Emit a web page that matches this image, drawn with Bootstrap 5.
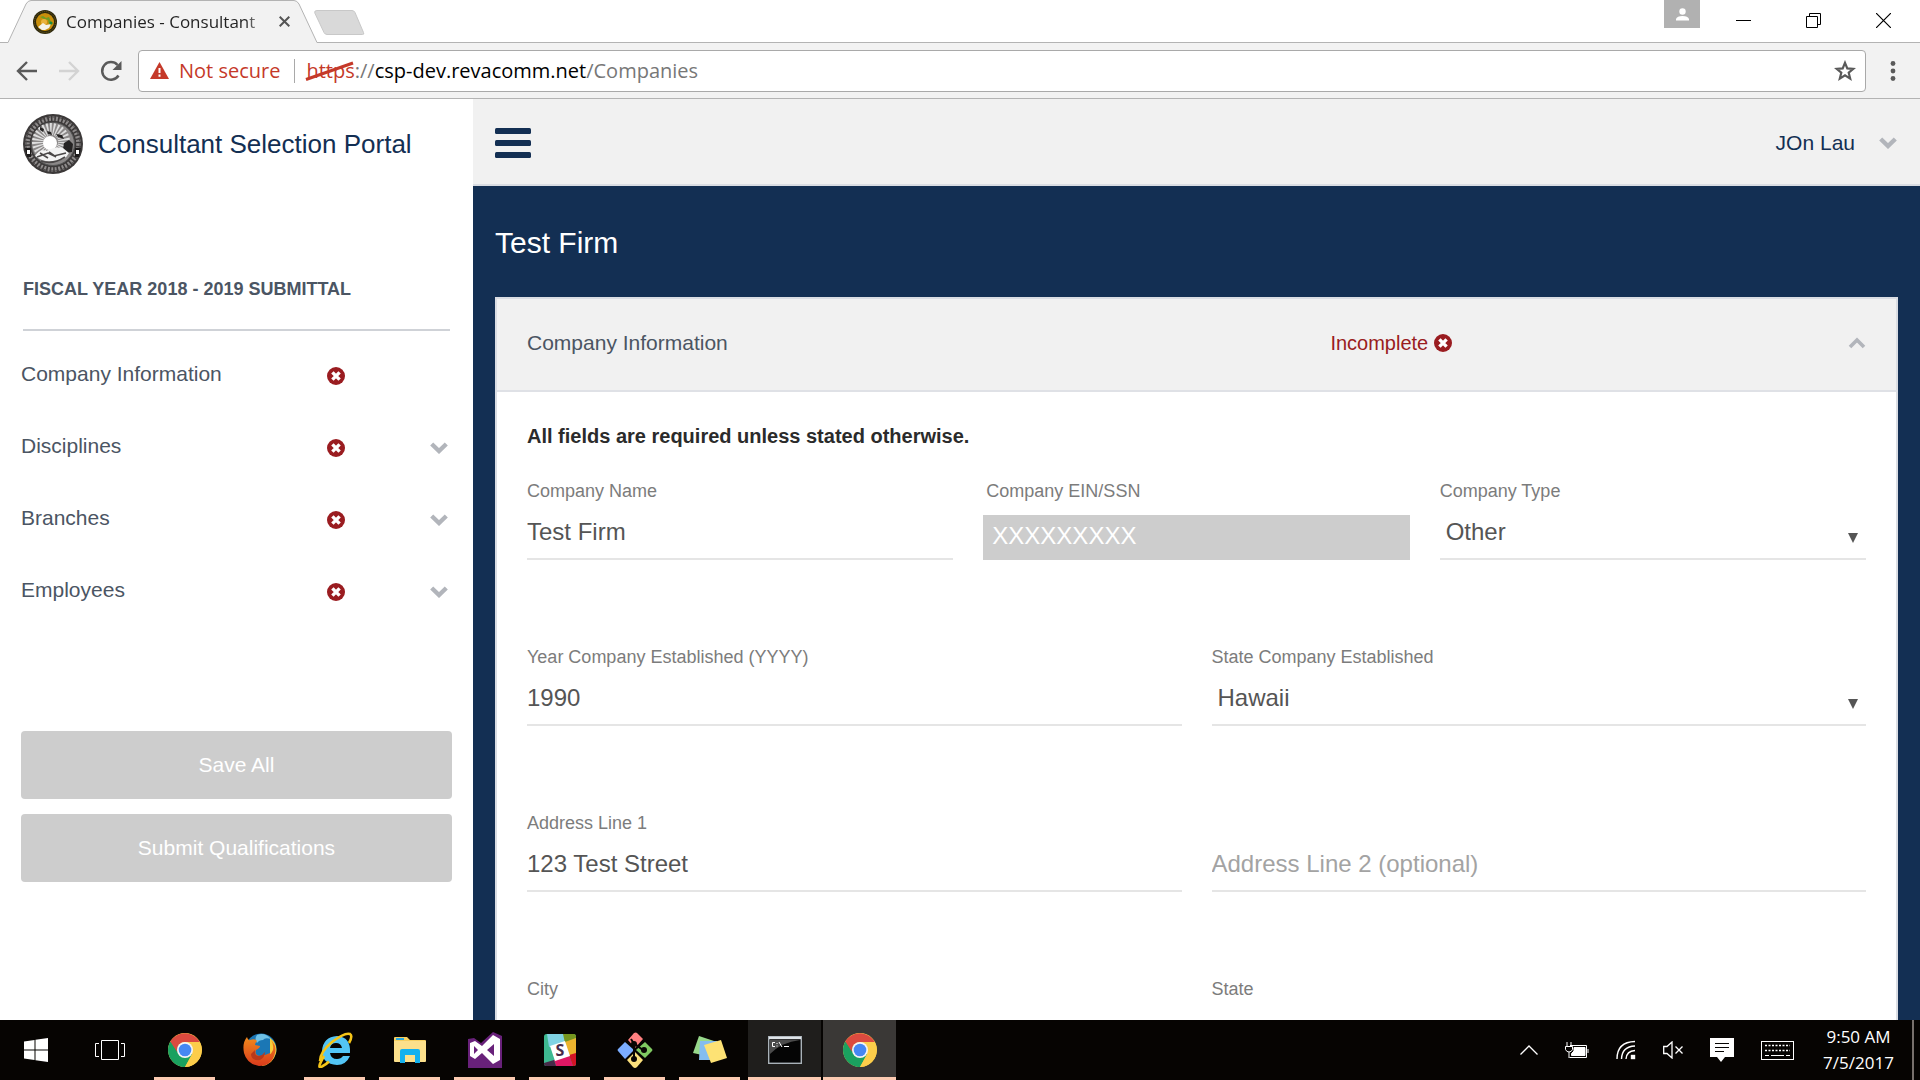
<!DOCTYPE html>
<html lang="en">
<head>
<meta charset="utf-8">
<meta name="viewport" content="width=device-width, initial-scale=1">
<title>Companies - Consultant Selection Portal</title>
<link href="https://cdn.jsdelivr.net/npm/bootstrap@5.3.0/dist/css/bootstrap.min.css" rel="stylesheet">
<style>
  :root { --navy: #132f53; --panel: #f1f1f1; --line: #dadde3; --slate: #4b5563; --alert: #9a1c20; --off: #cdcdcd; }
  body { font-family: "Liberation Sans", Arial, sans-serif; font-size: 21px; line-height: 24px; color: var(--slate); background: #fff; }
  svg { display: block; flex: none; }
  button { font: inherit; }
  .plain-btn { background: none; border: 0; padding: 0; color: inherit; display: flex; align-items: center; justify-content: center; }
  .chrome-ui { font-family: "Open Sans", "Noto Sans", sans-serif; }

  /* browser frame */
  .tab-strip { height: 43px; border-bottom: 1px solid #b3b3b3; }
  .tab-active { width: 310px; height: 43px; margin-left: 8px; margin-bottom: -1px; }
  .tab-content-row { padding: 0 28px 0 25px; height: 43px; font-size: 17px; color: #222; gap: 9px; }
  .tab-title { background: linear-gradient(90deg, #222 88%, #ccc 97%); -webkit-background-clip: text; background-clip: text; color: transparent; }
  .new-tab { margin: 10px 0 0 -4px; }
  .profile-btn { width: 36px; height: 28px; background: #b1b1b1; }
  .win-group { padding: 0 2px 0 8px; }
  .win-btn { width: 70px; height: 41px; color: #000; }
  .toolbar { height: 56px; background: #f2f2f2; border-bottom: 1px solid #b3b3b3; padding: 0 24px 0 16px; }
  .nav-icons { gap: 20px; width: 122px; }
  .omnibox { height: 42px; background: #fff; border: 1px solid #a9a9a9; border-radius: 4px; font-size: 20px; padding: 0 9px 0 11px; color: #777; }
  .insecure { color: #c53929; gap: 10px; }
  .url-sep { width: 1px; height: 24px; background: #a9a9a9; margin: 0 11px 0 14px; }
  .url-scheme { color: #c53929; }
  .strike-line { position: absolute; left: -1px; top: 3px; }

  /* application */
  .side-nav { flex: 0 0 473px; background: #fff; padding: 15px 21px 0; }
  .brand { color: var(--navy); font-size: 26px; line-height: 32px; gap: 15px; padding-left: 2px; height: 60px; }
  .year-head { font-size: 18px; line-height: 20px; font-weight: 700; margin: 105px 2px 0; padding-bottom: 30px; border-bottom: 2px solid #cfd2d7; }
  .side-list { margin-top: 7px; }
  .side-item { height: 72px; }
  .side-item > a { flex: 0 0 306px; }
  .side-item .plain-btn { width: 18px; margin-top: 4px; }
  .side-actions { gap: 15px; margin-top: 105px; }
  .btn-off { background: var(--off); color: #fff; border: 0; border-radius: 4px; height: 68px; font-size: 21px; }
  .btn-off:disabled { background: var(--off); color: #fff; opacity: 1; }
  .app-bar { height: 87px; background: var(--panel); border-bottom: 2px solid var(--line); padding: 3px 23px 0 22px; color: var(--navy); }
  .work-area { background: var(--navy); padding: 0 22px; }
  .firm-title { font-size: 30px; line-height: 36px; color: #fff; margin: 0; padding: 39px 0 36px; }
  .firm-card { border: 2px solid var(--line); background: #fff; }
  .firm-card-head { height: 93px; background: var(--panel); border-bottom: 2px solid #dfe1e6; padding: 0 30px 3px; }
  .head-name { flex: 0 0 60%; }
  .status-text { color: var(--alert); font-size: 20px; gap: 6px; }
  .firm-card-body { padding: 33px 30px 0; }
  .req-note { font-size: 20px; line-height: 22px; color: #2b2b2b; margin-bottom: 34px; }
  .field-row { display: flex; gap: 30px; height: 166px; align-items: flex-start; }
  .field { flex: 1 1 0; min-width: 0; }
  .field label { display: block; font-size: 18px; line-height: 20px; height: 20px; color: #7c7c7c; margin-bottom: 4px; }
  .line-input { display: block; width: 100%; height: 55px; border: 0; border-bottom: 2px solid #e5e5e5; border-radius: 0; padding: 0; font-size: 24px; line-height: 28px; color: #555; background-color: #fff; outline: 0; }
  .line-input::placeholder { color: #a3a3a3; opacity: 1; }
  select.line-input { appearance: none; padding-left: 6px; background: #fff url("data:image/svg+xml,%3Csvg xmlns='http://www.w3.org/2000/svg' width='10' height='10'%3E%3Cpath d='M0 0h10L5 10z' fill='%23555'/%3E%3C/svg%3E") no-repeat right 8px top 28px; }
  .field-locked label { padding-left: 3px; height: 30px; }
  .field-locked .line-input { background: var(--off); color: #fff; height: 45px; border: 0; padding: 0 9px 4px; }

  /* desktop task bar */
  .task-bar { height: 60px; background: #060402; color: #fff; }
  .task-app { width: 75px; height: 60px; border: solid transparent; border-width: 0 7px; }
  .task-run { box-shadow: inset 0 -3px #fbcab1; }
  .task-open { border-width: 0 1px; background-clip: padding-box; background-color: #1f1e1c; }
  .task-front { background-color: #3a3836; }
  .start-btn { width: 72px; height: 60px; }
  .tray { gap: 27px; padding-right: 6px; }
  .clock { font-size: 17px; line-height: 26px; width: 75px; text-align: center; white-space: nowrap; }
  .peek { width: 2px; height: 60px; background: #77706c; }
</style>
<script src="https://cdn.jsdelivr.net/npm/bootstrap@5.3.0/dist/js/bootstrap.bundle.min.js"></script>
</head>
<body class="vh-100 d-flex flex-column overflow-hidden">

<svg width="0" height="0" class="position-absolute" aria-hidden="true">
  <defs>
    <symbol id="bad" viewBox="0 0 18 18"><circle cx="9" cy="9" r="9" fill="#9a1c20"/><path d="M5.4 5.400l7.200 7.200M12.600 5.400l-7.200 7.200" stroke="#fff" stroke-width="3.400"/></symbol>
    <symbol id="down" viewBox="0 0 18 12"><path d="M1.700 2l7.300 7L16.300 2" fill="none" stroke="#b2b5bb" stroke-width="4.400"/></symbol>
    <symbol id="chrome" viewBox="0 0 34 34">
      <circle cx="17" cy="17" r="17" fill="#fccd4a"/>
      <path d="M17 17L2.300 8.500A17 17 0 0 0 17 34l7.400-12.800z" fill="#1aa15f"/>
      <path d="M2.300 8.500A17 17 0 0 1 31.700 9H17a8 8 0 0 0-7.500 10.500z" fill="#db4a3f"/>
      <path d="M17 9h14.800A17 17 0 0 1 17 34l7-13z" fill="#fccd4a"/>
      <circle cx="17" cy="17" r="8" fill="#f4f4f4"/><circle cx="17" cy="17" r="6.300" fill="#4587f3"/>
    </symbol>
  </defs>
</svg>

<header class="chrome-ui">
  <div class="tab-strip d-flex align-items-start">
    <div class="tab-active position-relative">
      <svg class="position-absolute" width="310" height="43" viewBox="0 0 310 43"><path d="M0 42.500L18 4Q20 .5 23 .5H286Q289 .5 291 4L309 42.500V43H0z" fill="#f2f2f2"/><path d="M0 42.500L18 4Q20 .5 23 .5H286Q289 .5 291 4L309 42.500" fill="none" stroke="#b3b3b3"/></svg>
      <div class="tab-content-row position-relative d-flex align-items-center">
        <svg width="24" height="24" viewBox="0 0 24 24"><circle cx="12" cy="12" r="12" fill="#2d280d"/><circle cx="12" cy="12" r="10.500" fill="none" stroke="#70601a" stroke-dasharray="1 1"/><circle cx="12" cy="12" r="9" fill="#c98f0b"/><path d="M7 7l3-1 3 2 3-1 2 5-2 2-1-4-4-1z" fill="#6d9c25"/><circle cx="11" cy="12" r="3" fill="#e9b23c"/><path d="M5 17l5-4 3 2 5-1-2 4-4 2H9z" fill="#f4f2ea"/><circle cx="18" cy="13" r="1.600" fill="#188b3c"/></svg>
        <span class="tab-title text-nowrap flex-grow-1">Companies - Consultant</span>
        <button class="plain-btn" aria-label="Close tab"><svg width="11" height="11" viewBox="0 0 11 11"><path d="M.7.7l9.600 9.600M10.300.7L.7 10.300" stroke="#555" stroke-width="2"/></svg></button>
      </div>
    </div>
    <button class="plain-btn new-tab" aria-label="New tab"><svg width="51" height="26" viewBox="0 0 51 26"><path d="M3 .5h35q2 0 3 2l8.500 20q1 2-1 2H13q-2 0-3-2L.8 3Q0 .5 3 .5z" fill="#d9d9d9" stroke="#c8c8c8"/></svg></button>
    <div class="ms-auto d-flex align-items-start">
      <button class="plain-btn profile-btn" aria-label="Profile"><svg width="13" height="13" viewBox="0 0 13 13" fill="#fff"><circle cx="6.500" cy="3.500" r="3.200"/><path d="M0 12.500V11q1-3 6.500-3T13 11v1.500z"/></svg></button>
      <span class="win-group d-flex">
        <button class="plain-btn win-btn" aria-label="Minimize"><svg width="15" height="2"><path d="M0 .5h15" stroke="#000"/></svg></button>
        <button class="plain-btn win-btn" aria-label="Restore"><svg width="15" height="15" viewBox="0 0 15 15"><path d="M.5 3.500h11v11H.5zM3.500 3V.5h11v11H12" fill="none" stroke="#000"/></svg></button>
        <button class="plain-btn win-btn" aria-label="Close"><svg width="15" height="15" viewBox="0 0 15 15"><path d="M0 0l15 15M15 0L0 15" stroke="#000" stroke-width="1.200"/></svg></button>
      </span>
    </div>
  </div>
  <div class="toolbar d-flex align-items-center">
    <div class="nav-icons d-flex align-items-center">
      <button class="plain-btn" aria-label="Back"><svg width="22" height="20" viewBox="0 0 22 20"><path d="M21 10H3M11 1l-9 9 9 9" fill="none" stroke="#5a5a5a" stroke-width="2.400"/></svg></button>
      <button class="plain-btn" aria-label="Forward"><svg width="22" height="20" viewBox="0 0 22 20"><path d="M1 10h18M11 1l9 9-9 9" fill="none" stroke="#d3d3d3" stroke-width="2.400"/></svg></button>
      <button class="plain-btn" aria-label="Reload"><svg width="22" height="22" viewBox="0 0 22 22"><path d="M18.500 15.500A8.800 8.800 0 1 1 17.500 5" fill="none" stroke="#5a5a5a" stroke-width="2.500"/><path d="M21.500 1v9h-9z" fill="#5a5a5a"/></svg></button>
    </div>
    <div class="omnibox flex-grow-1 d-flex align-items-center" role="textbox" aria-label="Address">
      <span class="insecure d-flex align-items-center"><svg width="19" height="17" viewBox="0 0 19 17"><path d="M9.500 0L19 17H0z" fill="#c53929"/><path d="M9.500 6v5M9.500 12.500v2.200" stroke="#fff" stroke-width="2"/></svg>Not secure</span>
      <span class="url-sep"></span>
      <span class="text-nowrap flex-grow-1"><span class="url-scheme position-relative">https<svg class="strike-line" width="50" height="22" viewBox="0 0 50 22"><path d="M1 19.500L48 3" stroke="#c53929" stroke-width="3"/></svg></span>://<span class="text-black">csp-dev.revacomm.net</span>/Companies</span>
      <button class="plain-btn" aria-label="Bookmark"><svg width="22" height="21" viewBox="0 0 22 21"><path d="M11 2.800l2.300 5.600 6 .4-4.600 3.900 1.500 5.900L11 15.400l-5.200 3.200 1.500-5.900L2.700 8.800l6-.4z" fill="none" stroke="#5a5a5a" stroke-width="2.200"/></svg></button>
    </div>
    <button class="plain-btn ps-4" aria-label="Menu"><svg width="6" height="20" viewBox="0 0 6 20" fill="#5a5a5a"><circle cx="3" cy="2.500" r="2.400"/><circle cx="3" cy="10" r="2.400"/><circle cx="3" cy="17.500" r="2.400"/></svg></button>
  </div>
</header>

<div class="d-flex flex-grow-1 overflow-hidden">
  <aside class="side-nav">
    <a href="#" class="brand d-flex align-items-center text-decoration-none">
      <svg width="60" height="60" viewBox="0 0 60 60">
        <circle cx="30" cy="30" r="30" fill="#3c3939"/>
        <circle cx="30" cy="30" r="25.500" fill="none" stroke="#8f8c8c" stroke-width="4.500" stroke-dasharray="2 1.600"/>
        <circle cx="30" cy="30" r="27" fill="none" stroke="#4a4747" stroke-width="1" stroke-dasharray="4 2"/>
        <circle cx="30" cy="30" r="21.500" fill="#8b8888" stroke="#555" stroke-width="1"/>
        <circle cx="28" cy="28" r="13" fill="none" stroke="#dedede" stroke-width="12" stroke-dasharray="1.500 1.500"/>
        <path d="M17 13l4 2-1 3-3-2zM24 17l4 1 1 3-4-1zM33 20l6 1 2 4-6-2zM41 29l5-3 4 4-1 8-6 1-3-4z" fill="#252323"/>
        <circle cx="27" cy="29" r="7" fill="#fff"/>
        <path d="M12 42q5-8 12-5 7-5 16-3l6 5q-4 8-15 8-10 2-19-5z" fill="#f3f3f3"/>
        <path d="M14 43l11-4 6 3 12-3M26 38l7 5M17 39l8 5M18 47q12 4 24-4" fill="none" stroke="#4a4747" stroke-width="1.600"/>
        <path d="M2 34h6v9H4zM58 34h-6v9h4z" fill="#1d1b1b"/><path d="M4 36h3v4H4zM53 36h3v4h-3z" fill="#fff"/>
      </svg>
      <span>Consultant Selection Portal</span>
    </a>
    <h2 class="year-head">FISCAL YEAR 2018 - 2019 SUBMITTAL</h2>
    <ul class="side-list list-unstyled mb-0">
      <li class="side-item d-flex align-items-center"><a href="#" class="text-reset text-decoration-none">Company Information</a><svg width="18" height="18" class="mt-1"><use href="#bad"/></svg></li>
      <li class="side-item d-flex align-items-center"><a href="#" class="text-reset text-decoration-none">Disciplines</a><svg width="18" height="18" class="mt-1"><use href="#bad"/></svg><button class="plain-btn ms-auto me-1" aria-label="Expand Disciplines"><svg width="18" height="12"><use href="#down"/></svg></button></li>
      <li class="side-item d-flex align-items-center"><a href="#" class="text-reset text-decoration-none">Branches</a><svg width="18" height="18" class="mt-1"><use href="#bad"/></svg><button class="plain-btn ms-auto me-1" aria-label="Expand Branches"><svg width="18" height="12"><use href="#down"/></svg></button></li>
      <li class="side-item d-flex align-items-center"><a href="#" class="text-reset text-decoration-none">Employees</a><svg width="18" height="18" class="mt-1"><use href="#bad"/></svg><button class="plain-btn ms-auto me-1" aria-label="Expand Employees"><svg width="18" height="12"><use href="#down"/></svg></button></li>
    </ul>
    <div class="side-actions d-flex flex-column">
      <button class="btn btn-off" disabled>Save All</button>
      <button class="btn btn-off" disabled>Submit Qualifications</button>
    </div>
  </aside>

  <main class="d-flex flex-column flex-grow-1 overflow-hidden">
    <div class="app-bar d-flex align-items-center justify-content-between flex-shrink-0">
      <button class="plain-btn" aria-label="Toggle menu"><svg width="36" height="30" viewBox="0 0 36 30" fill="#132f53"><rect width="36" height="6" rx="1.500"/><rect y="12" width="36" height="6" rx="1.500"/><rect y="24" width="36" height="6" rx="1.500"/></svg></button>
      <button class="plain-btn gap-4"><span>JOn Lau</span><svg width="18" height="12"><use href="#down"/></svg></button>
    </div>
    <div class="work-area flex-grow-1 overflow-hidden">
      <h1 class="firm-title">Test Firm</h1>
      <section class="firm-card">
        <div class="firm-card-head d-flex align-items-center">
          <span class="head-name">Company Information</span>
          <span class="status-text d-flex align-items-center">Incomplete <svg width="18" height="18"><use href="#bad"/></svg></span>
          <button class="plain-btn ms-auto" aria-label="Collapse"><svg width="18" height="12" viewBox="0 0 18 12"><path d="M2 10l7-7 7 7" fill="none" stroke="#b2b5bb" stroke-width="3.600"/></svg></button>
        </div>
        <form class="firm-card-body">
          <p class="req-note fw-bold">All fields are required unless stated otherwise.</p>
          <div class="field-row">
            <div class="field"><label for="cname">Company Name</label><input id="cname" class="line-input" type="text" value="Test Firm"></div>
            <div class="field field-locked"><label for="ein">Company EIN/SSN</label><input id="ein" class="line-input" type="text" value="XXXXXXXXX" readonly></div>
            <div class="field"><label for="ctype">Company Type</label><select id="ctype" class="line-input"><option>Other</option></select></div>
          </div>
          <div class="field-row">
            <div class="field"><label for="year">Year Company Established (YYYY)</label><input id="year" class="line-input" type="text" value="1990"></div>
            <div class="field"><label for="est">State Company Established</label><select id="est" class="line-input"><option>Hawaii</option></select></div>
          </div>
          <div class="field-row">
            <div class="field"><label for="addr1">Address Line 1</label><input id="addr1" class="line-input" type="text" value="123 Test Street"></div>
            <div class="field"><label for="addr2" aria-label="Address Line 2"></label><input id="addr2" class="line-input" type="text" placeholder="Address Line 2 (optional)"></div>
          </div>
          <div class="field-row">
            <div class="field"><label for="city">City</label><input id="city" class="line-input" type="text"></div>
            <div class="field"><label for="state">State</label><select id="state" class="line-input"></select></div>
          </div>
        </form>
      </section>
    </div>
  </main>
</div>

<footer class="task-bar chrome-ui d-flex align-items-center flex-shrink-0">
  <button class="plain-btn start-btn" aria-label="Start"><svg width="24" height="24" viewBox="0 0 24 24" fill="#fff"><path d="M0 3.500L10.500 2v9.500H0zM11.500 1.800L24 0v11.500H11.500zM0 12.500h10.500V22L0 20.500zM11.500 12.500H24V24l-12.500-1.800z"/></svg></button>
  <button class="plain-btn task-app" aria-label="Task view"><svg width="30" height="20" viewBox="0 0 30 20" fill="none" stroke="#fff"><path d="M6.500.5h17v19h-17zM4 3.500H.5v13H4M26 3.500h3.500v13H26"/></svg></button>
  <button class="plain-btn task-app task-run" aria-label="Chrome"><svg width="34" height="34"><use href="#chrome"/></svg></button>
  <button class="plain-btn task-app" aria-label="Firefox"><svg width="34" height="34" viewBox="0 0 34 34"><defs><linearGradient id="ff" x1="0" y1="0" x2="0" y2="1"><stop offset="0" stop-color="#f08a1c"/><stop offset="1" stop-color="#d93a1c"/></linearGradient></defs><circle cx="18" cy="16" r="15.500" fill="#1b77b5"/><path d="M14 2q8-3 14 4-6-2-8 1-4 0-6 3-3-4 0-8z" fill="#6fc1e6"/><path d="M27 5q8 6 6 15-3 12-15 13 10-5 9-15z" fill="#f7cf3a"/><path d="M4 4q1 4 3 3 5-2 7 1-2 2-2 4l5 1q0 2-4 4-2 6 5 6 5-1 9-3 0 3 3-3 1-6-2-10 6 6 4 13-3 13-16 13Q4 31 1 20-1 10 4 4z" fill="url(#ff)"/><path d="M12 17q-1 6 4 6 4-1 6-4 0 5-5 8-9 1-9-6z" fill="#b9391c"/></svg></button>
  <button class="plain-btn task-app task-run" aria-label="Internet Explorer"><svg width="36" height="36" viewBox="0 0 36 36"><path d="M33 21H13q1 6 7 6 4 0 6-3h7q-4 9-13 9Q5 32 5 19 6 5 20 4q14 1 13 17zM13 16h12q-1-5-6-5t-6 5z" fill="#53c5f5" fill-rule="evenodd"/><path d="M7 24Q-1 38 5 34.500q4-2 7-5M3 29Q3 20 15 10 28 0 33 2q3 2-1 9" fill="none" stroke="#f5c518" stroke-width="2.600"/></svg></button>
  <button class="plain-btn task-app task-run" aria-label="File Explorer"><svg width="32" height="28" viewBox="0 0 32 28"><path d="M0 2q0-1 1-1h12l3 3h15q1 0 1 1v20H0z" fill="#f6cf60"/><path d="M0 5h32v20q0 1-1 1H1q-1 0-1-1z" fill="#fce08b"/><path d="M2 3h8" stroke="#27a8e0" stroke-width="2"/><path d="M6 15q0-2 2-2h16q2 0 2 2v12h-5v-8H11v8H6z" fill="#14b1ee"/></svg></button>
  <button class="plain-btn task-app task-run" aria-label="Visual Studio"><svg width="34" height="36" viewBox="0 0 34 36"><path d="M0 7l6-1 7 5L25 0l9 4v32H0z" fill="#68217a"/><path d="M25 3l7 4v21l-7 4-11-11-7 6-5-3V11l5-2 7 5zm1 9l-7 6 7 6zM6 14v8l4-4z" fill="#fff" fill-rule="evenodd"/></svg></button>
  <button class="plain-btn task-app task-run" aria-label="Slack"><svg width="32" height="32" viewBox="0 0 32 32"><defs><clipPath id="sk"><rect width="32" height="32" rx="2.500"/></clipPath></defs><g clip-path="url(#sk)"><path d="M0 0h32v32H0z" fill="#3eb991"/><path d="M3 0h17l2 8-17 5z" fill="#80d3e3"/><path d="M19 0h13v4l-11 5z" fill="#75961f"/><path d="M21 8l11-4v16l-7 2z" fill="#ecb32d"/><path d="M10 26l15-5 4 11H12z" fill="#e01765"/><path d="M25 21l7-2v13h-3z" fill="#d21325"/><path d="M0 29l10-3 2 6H0z" fill="#472a49"/><path d="M6 12l15-5 5 15-15 5z" fill="#fff"/></g><text x="16" y="22" text-anchor="middle" font-size="16" font-weight="700" fill="#472a49">S</text></svg></button>
  <button class="plain-btn task-app task-run" aria-label="Git"><svg width="36" height="36" viewBox="0 0 36 36"><path d="M17 1q2-1 3 0l6 6-8 9-7-8z" fill="#ff8080"/><path d="M28 10l7 7q1 1 0 2l-7 7-9-8z" fill="#80ca62"/><path d="M8 10l9 8-9 9-7-8q-1-1 0-2z" fill="#7badff"/><path d="M18 20l8 8-6 7q-2 2-4 0l-6-7z" fill="#fbe07c"/><path d="M14 7l3 5v16M18 12l9 7" stroke="#090604" stroke-width="2" fill="none"/><circle cx="17" cy="12" r="3" fill="#090604"/><circle cx="17" cy="27" r="3" fill="#090604"/><circle cx="27" cy="18" r="3" fill="#090604"/></svg></button>
  <button class="plain-btn task-app task-run" aria-label="Sticky Notes"><svg width="34" height="28" viewBox="0 0 34 28"><path d="M6 0l15 5-7 15-14-3z" fill="#97d88b"/><path d="M7 5h17v19H6z" fill="#84bdf0"/><path d="M11 9l17-5 6 18-16 5z" fill="#fde274"/></svg></button>
  <button class="plain-btn task-app task-run task-open" aria-label="Command Prompt"><svg width="34" height="28" viewBox="0 0 34 28"><rect x=".7" y=".7" width="32.600" height="26.600" fill="#050505" stroke="#a9b2b8" stroke-width="1.400"/><path d="M1 2h32" stroke="#dfe4e8" stroke-width="2.400"/><path d="M2 4h30Q14 6 2 18z" fill="#4b4b4b"/><path d="M7 6.500H4.500v4H7M9 7v1M9 9.500v1M11 6l3 5M16 10.500h5" stroke="#fff" fill="none"/></svg></button>
  <button class="plain-btn task-app task-run task-open task-front" aria-label="Chrome window"><svg width="34" height="34"><use href="#chrome"/></svg></button>

  <div class="tray ms-auto d-flex align-items-center">
    <svg width="18" height="10" viewBox="0 0 18 10"><path d="M.5 9.500L9 1l8.500 8.500" fill="none" stroke="#fff" stroke-width="1.300"/></svg>
    <svg width="24" height="17" viewBox="0 0 24 17" fill="none" stroke="#fff"><path d="M5 3.500h16.500v12H4.500M2 0v4M6 0v4M.5 4.500h7v3q-1 2.500-3.500 2.500T.5 7.500zM4 10v6"/><path d="M9 5.500h11v8H6.500v-2L9 9z" fill="#fff"/><path d="M23 7v4"/></svg>
    <svg width="20" height="20" viewBox="0 0 20 20" fill="none" stroke="#fff" stroke-width="1.400"><path d="M1 19Q1 2 19 1.500M5.500 19Q6 6.500 19 6M10 19q.5-8 9-8.500"/><rect x="15.500" y="15.500" width="3" height="3" fill="#fff"/></svg>
    <svg width="20" height="18" viewBox="0 0 20 18" fill="none" stroke="#fff" stroke-width="1.300"><path d="M.7 5.500H4L9 1v16l-5-4.500H.7zM12.500 5.500l7 7M19.500 5.500l-7 7"/></svg>
    <svg width="24" height="24" viewBox="0 0 24 24"><path d="M0 0h24v19H15l-4 5-4-5H0z" fill="#fff"/><path d="M5 5.500h14M5 9.500h14M5 13.500h9" stroke="#060402"/></svg>
    <svg width="33" height="19" viewBox="0 0 33 19" fill="none" stroke="#fff"><rect x=".5" y=".5" width="32" height="18"/><path d="M4 4.500h25M4 9.500h25" stroke-width="1.500" stroke-dasharray="2 1.500"/><path d="M4 14.500h4M10 14.500h13M25 14.500h4"/></svg>
    <div class="d-flex align-items-center"><time class="clock me-3">9:50 AM<br>7/5/2017</time><span class="peek"></span></div>
  </div>
</footer>
</body>
</html>
